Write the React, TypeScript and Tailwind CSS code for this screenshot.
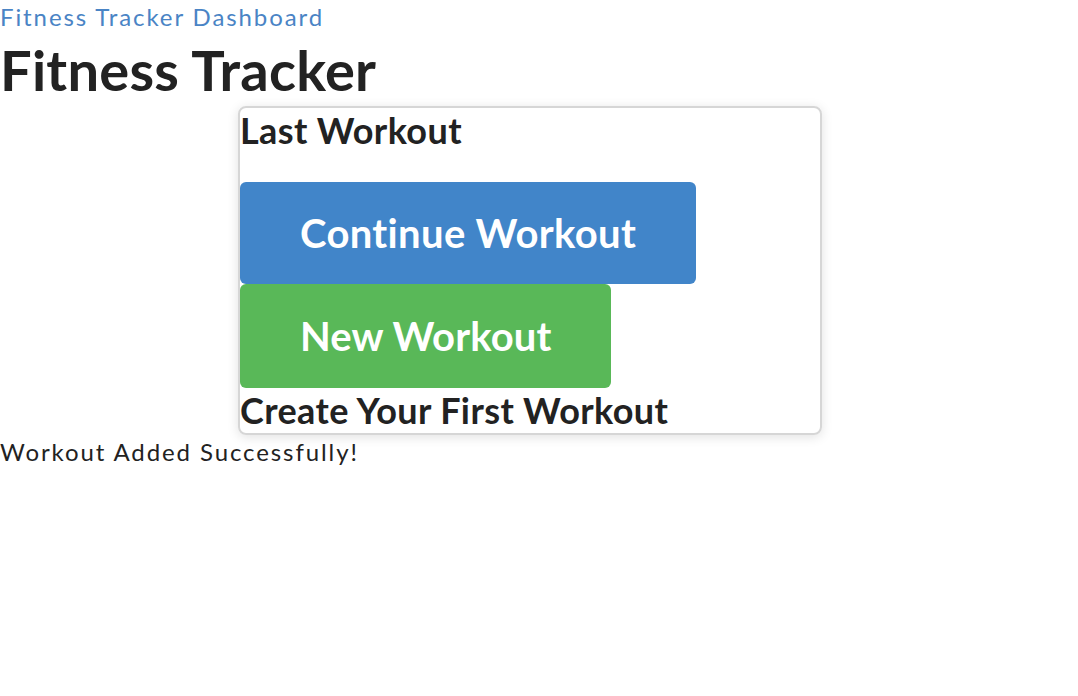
export default function App() {
  return (
    <div className="min-h-screen bg-white font-['Lato','Liberation_Sans',sans-serif] text-[#222] [font-variant-ligatures:none]">
      <a href="#" className="block text-[24px] leading-[34px] tracking-[1.9px] text-[#4a84c5]">
        Fitness Tracker Dashboard
      </a>
      <h1 className="text-[56px] font-bold leading-[72px] tracking-[0.25px]">Fitness Tracker</h1>
      <div className="ml-[238px] w-[584px] rounded-lg border-2 border-[#d6d6d6] pb-px shadow-[0_2px_12px_rgba(0,0,0,0.12)]">
        <h2 className="text-[36px] font-bold leading-[44px] tracking-[0.4px]">Last Workout</h2>
        <div className="mt-[30px] flex flex-col items-start">
          <button className="rounded-md bg-[#4185c9] px-[60px] py-[26px] text-[40px] font-bold leading-[50px] tracking-[0.35px] text-white">
            Continue Workout
          </button>
          <button className="rounded-md bg-[#59b858] px-[60px] py-[27px] text-[40px] font-bold leading-[50px] tracking-[0.1px] text-white">
            New Workout
          </button>
        </div>
        <h2 className="text-[36px] font-bold leading-[44px] tracking-[0.4px]">Create Your First Workout</h2>
      </div>
      <p className="text-[24px] leading-[34px] tracking-[1.9px]">Workout Added Successfully!</p>
    </div>
  );
}
